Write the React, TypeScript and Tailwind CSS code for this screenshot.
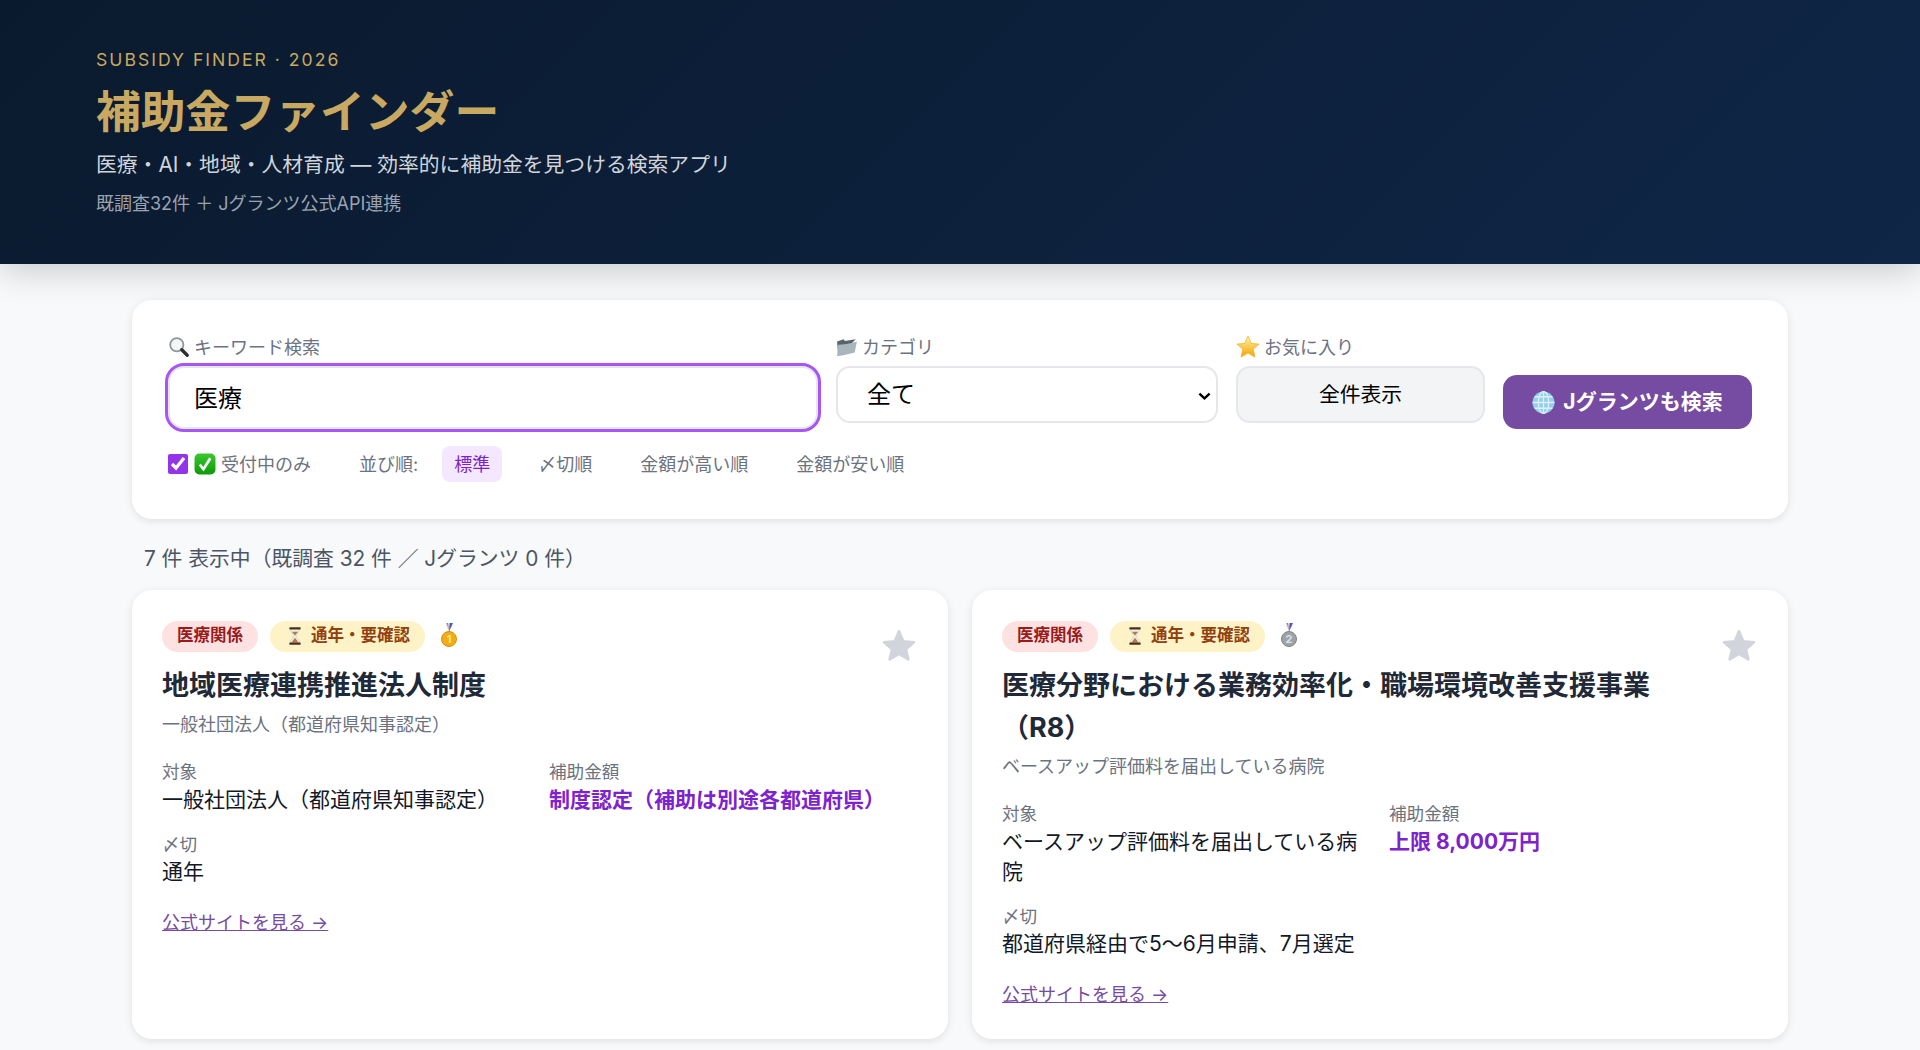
import { useState } from 'react'

const Magnifier = () => (
  <svg viewBox="0 0 20 20" className="w-[22px] h-[22px] shrink-0">
    <circle cx="8" cy="8" r="6" fill="#f4f6f8" stroke="#8f969c" strokeWidth="1.6" />
    <path d="M12.5 12.5 L17.5 17.5" stroke="#2b2f33" strokeWidth="3" strokeLinecap="round" />
  </svg>
)

const Folder = () => (
  <svg viewBox="0 0 20 20" className="w-[22px] h-[22px] shrink-0">
    <path d="M1 5 L7 3 L8 4.5 L18 3 L15 6 L2 18 Z" fill="#59636c" />
    <path d="M2 8 Q9 8 19 5 L17 15 Q10 17 1 18.5 Z" fill="#a9b5bd" />
  </svg>
)

const StarEmoji = () => (
  <svg viewBox="0 0 20 20" className="w-[24px] h-[24px] shrink-0">
    <defs>
      <linearGradient id="star-g" x1="0" y1="0" x2="0" y2="1">
        <stop offset="0" stopColor="#fff3a8" />
        <stop offset="1" stopColor="#f5a300" />
      </linearGradient>
    </defs>
    <path d="M10 1 L12.7 7 L19.2 7.6 L14.3 11.9 L15.8 18.4 L10 15 L4.2 18.4 L5.7 11.9 L.8 7.6 L7.3 7 Z" fill="url(#star-g)" stroke="#f0b020" strokeWidth=".6" strokeLinejoin="round" />
  </svg>
)

const CheckEmoji = () => (
  <svg viewBox="0 0 21 21" className="w-[22px] h-[22px] shrink-0">
    <defs>
      <linearGradient id="check-g" x1="0" y1="0" x2="0" y2="1">
        <stop offset="0" stopColor="#3cc72e" />
        <stop offset="1" stopColor="#0c9a08" />
      </linearGradient>
    </defs>
    <rect x="0.5" y="0.5" width="20" height="20" rx="4.5" fill="url(#check-g)" />
    <path d="M5.5 11 L9 15.5 L15.5 5" fill="none" stroke="#fff" strokeWidth="2.6" />
  </svg>
)

const Globe = () => (
  <svg viewBox="0 0 22 22" className="w-[23px] h-[23px] shrink-0">
    <circle cx="11" cy="11" r="10.5" fill="#8fd0ee" />
    <g fill="none" stroke="#e4eef2" strokeWidth="1.2">
      <ellipse cx="11" cy="11" rx="5" ry="10.5" />
      <path d="M11 .5 V21.5 M.5 11 H21.5 M2.5 5.5 H19.5 M2.5 16.5 H19.5" />
    </g>
  </svg>
)

const Hourglass = () => (
  <svg viewBox="0 0 16 22" className="w-[14px] h-[22px] shrink-0">
    <path d="M3 3 H13 V5.5 L9 11 L13 16.5 V19 H3 V16.5 L7 11 L3 5.5 Z" fill="#eef0f0" stroke="#b9bcbc" strokeWidth=".5" />
    <path d="M4.5 6 H11.5 L8 10.5 Z" fill="#b9793f" />
    <path d="M8 13 L12 18.5 H4 Z" fill="#b9793f" />
    <rect x="1.5" y="1" width="13" height="2.6" rx=".8" fill="#4a2f1c" />
    <rect x="1.5" y="18.4" width="13" height="2.6" rx=".8" fill="#4a2f1c" />
  </svg>
)

const Medal = ({ rank }: { rank: 1 | 2 }) => {
  const fill = rank === 1 ? '#f0ad16' : '#9ea3a8'
  const rim = rank === 1 ? '#d98f0a' : '#7f8489'
  const num = rank === 1 ? '#ffe68a' : '#dfe2e5'
  return (
    <svg viewBox="0 0 16 24" className="w-[16px] h-[24px] shrink-0">
      <path d="M4 0 H7.5 L8 9 Z" fill="#d9dde8" />
      <path d="M12 0 H8.5 L8 9 Z" fill="#3c63c4" />
      <path d="M6 0 H7 L8 8 Z" fill="#d8433c" />
      <circle cx="8" cy="16" r="7.5" fill={fill} stroke={rim} strokeWidth="1" />
      <text x="8" y="20" textAnchor="middle" fontSize="11" fontWeight="700" fill={num} fontFamily="Inter, sans-serif">{rank}</text>
    </svg>
  )
}

type Grant = {
  rank: 1 | 2
  title: string
  org: string
  target: string
  amount: string
  deadline: string
}

const grants: Grant[] = [
  {
    rank: 1,
    title: '地域医療連携推進法人制度',
    org: '一般社団法人（都道府県知事認定）',
    target: '一般社団法人（都道府県知事認定）',
    amount: '制度認定（補助は別途各都道府県）',
    deadline: '通年',
  },
  {
    rank: 2,
    title: '医療分野における業務効率化・職場環境改善支援事業（R8）',
    org: 'ベースアップ評価料を届出している病院',
    target: 'ベースアップ評価料を届出している病院',
    amount: '上限 8,000万円',
    deadline: '都道府県経由で5〜6月申請、7月選定',
  },
]

const GrantCard = ({ grant }: { grant: Grant }) => (
  <div className="flex flex-col h-[449px] bg-white rounded-[20px] px-[30px] pt-[31px] shadow-[0_2px_8px_rgba(0,0,0,0.1)]">
    <div className="flex items-start">
      <div className="flex-1 min-w-0">
        <div className="flex items-center gap-[12px] h-[31px]">
          <span className="h-[31px] px-[15px] rounded-full bg-[#fee2e2] text-[#991b1b] text-[16.5px] font-bold leading-[29px]">医療関係</span>
          <span className="flex items-center gap-[9px] h-[31px] pl-[18px] pr-[15px] pb-[2px] rounded-full bg-[#fef3c7] text-[#92400e] text-[16.5px] font-bold">
            <Hourglass />
            通年・要確認
          </span>
          <span className="ml-[4px] -mt-[4px]">
            <Medal rank={grant.rank} />
          </span>
        </div>
        <h3 className="mt-[13px] pr-[44px] text-[27px] leading-[42px] font-bold text-[#1f2937]">{grant.title}</h3>
      </div>
      <button className="mt-[8px] mr-[2px] w-[34px] h-[32px]">
        <svg viewBox="0 0 32 30" className="w-[34px] h-[32px]">
          <path d="M16 2 L20 11.5 L30 12.4 L22.5 19 L24.8 28.5 L16 23.4 L7.2 28.5 L9.5 19 L2 12.4 L12 11.5 Z" fill="#d1d5db" stroke="#d1d5db" strokeWidth="2.5" strokeLinejoin="round" />
        </svg>
      </button>
    </div>
    <p className="mt-[4px] text-[18px] leading-[27px] text-[#6b7280]">{grant.org}</p>
    <div className="grid grid-cols-2 gap-x-[18px] mt-[21px]">
      <div>
        <div className="text-[17.6px] leading-[26px] text-[#6b7280]">対象</div>
        <div className="text-[21px] leading-[30px] text-[#111827]">{grant.target}</div>
      </div>
      <div>
        <div className="text-[17.6px] leading-[26px] text-[#6b7280]">補助金額</div>
        <div className="text-[21px] leading-[30px] font-bold text-[#7e22ce]">{grant.amount}</div>
      </div>
      <div className="mt-[17px]">
        <div className="text-[17.6px] leading-[26px] text-[#6b7280]">〆切</div>
        <div className="-mt-[1px] text-[21px] leading-[30px] text-[#111827]">{grant.deadline}</div>
      </div>
    </div>
    <a href="#" className="mt-[22px] self-start text-[18px] leading-[27px] text-[#764ba2] underline">公式サイトを見る →</a>
  </div>
)

export default function App() {
  const [keyword, setKeyword] = useState('医療')
  const [openOnly, setOpenOnly] = useState(true)

  return (
    <div className="min-h-screen bg-[#f8f9fb] font-['Inter','Noto_Sans_CJK_JP',sans-serif]">
      <header className="relative h-[264px] pl-[96px] pt-[47px] bg-[linear-gradient(135deg,#0a1a2e,#0f2647)] shadow-[0_8px_32px_rgba(0,0,0,0.18)]">
        <p className="text-[17.6px] leading-[26px] tracking-[2px] text-[#c9a961]">SUBSIDY FINDER · 2026</p>
        <h1 className="mt-[8px] text-[44.8px] leading-[62px] font-bold text-[#c9a961]">補助金ファインダー</h1>
        <p className="mt-[6px] text-[20.8px] leading-[31px] text-[#d1d5db]">医療・AI・地域・人材育成 — 効率的に補助金を見つける検索アプリ</p>
        <p className="mt-[11px] text-[18px] leading-[26px] text-[#9ca3af]">既調査32件 ＋ Jグランツ公式API連携</p>
      </header>

      <main className="px-[132px] pt-[36px]">
        <section className="h-[219px] bg-white rounded-[20px] px-[36px] pt-[34px] shadow-[0_2px_8px_rgba(0,0,0,0.1)]">
          <div className="flex gap-[18px] h-[95px]">
            <div className="flex flex-col w-[650px]">
              <label className="flex items-center gap-[4px] h-[26px] mb-[6px] text-[18px] text-[#6b7280]"><Magnifier />キーワード検索</label>
              <input
                value={keyword}
                onChange={(e) => setKeyword(e.target.value)}
                className="h-[63px] px-[24px] pb-[2px] rounded-[16px] border-2 border-[#e5e7eb] outline-[3px] outline-[#a855f7] text-[24px] text-black"
              />
            </div>
            <div className="flex flex-col w-[382px]">
              <label className="flex items-center gap-[4px] h-[26px] mb-[6px] text-[18px] text-[#6b7280]"><Folder />カテゴリ</label>
              <div className="relative">
                <select className="w-full h-[57px] pl-[29px] appearance-none rounded-[14px] border-2 border-[#e5e7eb] bg-white text-[24px] text-black">
                  <option>全て</option>
                </select>
                <svg viewBox="0 0 14 8" className="absolute right-[7px] top-[26px] w-[13px] h-[8px]">
                  <path d="M1.5 1.5 L7 6.5 L12.5 1.5" fill="none" stroke="#000" strokeWidth="2.6" />
                </svg>
              </div>
            </div>
            <div className="flex flex-col w-[249px]">
              <label className="flex items-center gap-[4px] h-[26px] mb-[6px] text-[18px] text-[#6b7280]"><StarEmoji />お気に入り</label>
              <button className="h-[57px] rounded-[14px] border-2 border-[#e5e7eb] bg-[#f3f4f6] text-[20.8px] text-black">全件表示</button>
            </div>
            <button className="self-end flex items-center justify-center gap-[8px] w-[249px] h-[54px] rounded-[14px] bg-[#764ba2] text-white text-[21px] font-bold">
              <Globe />
              Jグランツも検索
            </button>
          </div>
          <div className="flex items-center h-[36px] mt-[18px] pb-[2px] text-[18px] text-[#6b7280]">
            <label className="flex items-center">
              <input
                type="checkbox"
                checked={openOnly}
                onChange={(e) => setOpenOnly(e.target.checked)}
                className="w-[20px] h-[20px] accent-[#9333ea]"
              />
              <span className="ml-[6px]"><CheckEmoji /></span>
              <span className="ml-[5px]">受付中のみ</span>
            </label>
            <span className="ml-[48px]">並び順:</span>
            <div className="flex items-center gap-[24px] ml-[24px]">
              <button className="h-[36px] px-[12px] rounded-[8px] bg-[#f3e8ff] text-[#7e22ce]">標準</button>
              <button className="h-[36px] px-[12px]">〆切順</button>
              <button className="h-[36px] px-[12px]">金額が高い順</button>
              <button className="h-[36px] px-[12px]">金額が安い順</button>
            </div>
          </div>
        </section>

        <p className="mt-[25px] pl-[12px] text-[20.8px] leading-[30px] text-[#4b5563]">7 件 表示中（既調査 32 件 ／ Jグランツ 0 件）</p>

        <div className="grid grid-cols-2 gap-[24px] mt-[16px]">
          {grants.map((g) => (
            <GrantCard key={g.rank} grant={g} />
          ))}
        </div>
      </main>
    </div>
  )
}
